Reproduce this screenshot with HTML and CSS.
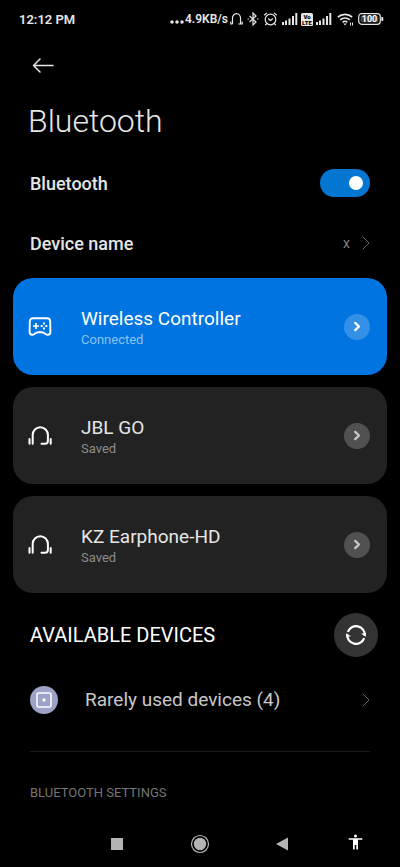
FILE: index.html
```html
<!DOCTYPE html>
<html lang="en">
<head>
<meta charset="utf-8">
<meta name="viewport" content="width=device-width, initial-scale=1">
<title>Bluetooth</title>
<link rel="stylesheet" href="styles.css">
</head>
<body>
<svg class="symbols" aria-hidden="true">
  <symbol id="signal" viewBox="0 0 16 12"><path d="M0 9h2v3H0zM3 7.500h2V12H3zM6.500 5.500h2V12h-2zM10 3h2v9h-2zM13.300 0h2v12h-2z" fill="currentColor"/></symbol>
  <symbol id="chevron" viewBox="0 0 8 14"><path d="M.7.7 7 7 .7 13.300" fill="none" stroke="currentColor"/></symbol>
  <symbol id="arrow" viewBox="0 0 26 26"><path d="m11.200 8.900 3.800 3.600-3.800 3.600" fill="none" stroke="currentColor" stroke-width="2.300" stroke-linecap="round" stroke-linejoin="round"/></symbol>
  <symbol id="headset" viewBox="0 0 24 20"><g fill="none" stroke="currentColor" stroke-width="2" stroke-linecap="round" stroke-linejoin="round"><path d="M4.700 17.700V8.800a7.600 7.600 0 0 1 15.200 0V15q0 2.700-2.700 2.700h-3.700M1.500 13V17.700M22.700 13V17.700"/></g></symbol>
</svg>
<div class="screen">
  <header class="status">
    <span class="clock">12:12 PM</span>
    <span class="speed"><svg width="14" height="4" viewBox="0 0 14 4"><path d="M2 2h0M7 2h0M12 2h0" stroke="currentColor" stroke-width="3.500" stroke-linecap="round"/></svg>4.9KB/s</span>
    <div class="tray">
      <svg width="13" height="13" viewBox="0 0 13 13" fill="none" stroke="currentColor" stroke-width="1.200"><path d="M2.500 11V5.200a4 4.500 0 0 1 8 0V11H8.300M.8 8.500v2.500h1.700M12.200 8.500v2.500h-1.700"/></svg>
      <svg width="14" height="14" viewBox="0 0 14 14" fill="none" stroke="currentColor" stroke-width="1.200"><path d="m3.500 4 6.500 6-3 3V1l3 3-6.500 6"/><path d="M1.500 7H3M11 7h1.500"/></svg>
      <svg width="16" height="14" viewBox="0 0 16 14" fill="none" stroke="currentColor" stroke-width="1.200"><circle cx="7.500" cy="7.500" r="5.300"/><path d="M5.200 6.500 7.500 8.500l2.500-2M1.200 3.300 4 .9M13.800 3.300 11 .9M3.700 11.500l-1.400 1.600M11.300 11.500l1.400 1.600"/></svg>
      <svg width="16" height="12"><use href="#signal"/></svg>
      <svg width="12" height="13" viewBox="0 0 12 13"><rect width="12" height="13" rx="1.500" fill="currentColor"/><text class="volte" x="6" y="6" text-anchor="middle">Vo</text><text class="volte" x="6" y="12" text-anchor="middle">LTE</text></svg>
      <svg width="16" height="12"><use href="#signal"/></svg>
      <svg class="wifi" width="17" height="13" viewBox="0 0 17 13" fill="none" stroke="currentColor" stroke-width="1.600"><path d="M.8 4.200a10.500 10.500 0 0 1 14.400 0M3.200 6.900a7 7 0 0 1 9.600 0M5.600 9.300a3.600 3.600 0 0 1 4.800 0"/><path d="m8 12.500-1.600-1.900h3.200z" fill="currentColor" stroke="none"/><path d="M13.500 9.500v3M15.500 9.500v3" stroke-width="1"/></svg>
      <svg width="26" height="12" viewBox="0 0 26 12"><rect x=".7" y=".7" width="21.600" height="10.600" rx="3" fill="none" stroke="currentColor" stroke-width="1.200"/><rect x="2.500" y="2.500" width="18" height="7" rx="1.500" fill="#444"/><path d="M23.300 4h1q1 0 1 1v2q0 1-1 1h-1z" fill="currentColor"/><text class="charge" x="11.500" y="9" text-anchor="middle">100</text></svg>
    </div>
  </header>

  <main>
    <div class="appbar">
      <button class="back" type="button" aria-label="Back"><svg width="22" height="16" viewBox="0 0 22 16" fill="none" stroke="currentColor" stroke-width="1.500" stroke-linejoin="round" stroke-linecap="round"><path d="M21 8.500H1.500M8 2 1.500 8.500 8 15"/></svg></button>
    </div>
    <h1>Bluetooth</h1>

    <div class="setting">
      <label for="bt">Bluetooth</label>
      <input class="switch" id="bt" type="checkbox" role="switch" checked>
    </div>
    <a class="setting" href="#name">
      <span>Device name</span>
      <span class="value">x <svg class="chev" width="8" height="14"><use href="#chevron"/></svg></span>
    </a>

    <section class="cards">
      <article class="card connected">
        <svg class="kind" width="24" height="20" viewBox="0 0 24 20" fill="none" stroke="currentColor" stroke-width="1.900" stroke-linejoin="round"><path d="M5 1.300h14q3.200 0 3.200 3.200l.2 10.500q0 2.700-2.500 2.700-1.400 0-2.400-.8L16 16q-1-.8-2.200-.8h-3.600q-1.200 0-2.200.8l-1.500.9q-1 .8-2.400.8-2.500 0-2.500-2.700L1.800 4.500Q1.800 1.300 5 1.300z"/><path d="M8 6v6M5 9h6" stroke-width="1.700"/><path d="M16 5.500v2M16 10.500v2M12.700 9h2M17.300 9h2" stroke-width="1.900"/></svg>
        <div class="info"><h2>Wireless Controller</h2><p>Connected</p></div>
        <button class="more" type="button" aria-label="Wireless Controller details"><svg width="26" height="26"><use href="#arrow"/></svg></button>
      </article>
      <article class="card">
        <svg class="kind" width="24" height="20"><use href="#headset"/></svg>
        <div class="info"><h2>JBL GO</h2><p>Saved</p></div>
        <button class="more" type="button" aria-label="JBL GO details"><svg width="26" height="26"><use href="#arrow"/></svg></button>
      </article>
      <article class="card">
        <svg class="kind" width="24" height="20"><use href="#headset"/></svg>
        <div class="info"><h2>KZ Earphone-HD</h2><p>Saved</p></div>
        <button class="more" type="button" aria-label="KZ Earphone-HD details"><svg width="26" height="26"><use href="#arrow"/></svg></button>
      </article>
    </section>

    <div class="available">
      <h2>AVAILABLE DEVICES</h2>
      <button class="refresh" type="button" aria-label="Refresh"><svg width="22" height="22" viewBox="0 0 22 22" fill="none" stroke="currentColor" stroke-width="2.200"><path d="M2.800 7.800A8.800 8.800 0 0 1 19.800 11.500M19.200 14.200A8.800 8.800 0 0 1 2.200 10.500"/><path d="m16 9.700 4.900-.7v3.700zM6 12.300l-4.900.7V9.300z" fill="currentColor" stroke="none"/></svg></button>
    </div>
    <a class="rare" href="#rare">
      <svg width="28" height="28" viewBox="0 0 28 28"><circle cx="14" cy="14" r="14" fill="#9ca3c6"/><rect x="7" y="7" width="14" height="14" rx="1.500" fill="none" stroke="#fff" stroke-width="1.500"/><circle cx="14" cy="14" r="1.700" fill="#fff"/></svg>
      <span>Rarely used devices (4)</span>
      <svg class="chev" width="8" height="14"><use href="#chevron"/></svg>
    </a>
    <h3>BLUETOOTH SETTINGS</h3>
  </main>

  <nav class="nav">
    <div class="keys">
      <button type="button" aria-label="Recent apps"><svg width="20" height="20" viewBox="0 0 20 20"><path d="M4 4h12v12H4z" fill="currentColor"/></svg></button>
      <button type="button" aria-label="Home"><svg width="20" height="20" viewBox="0 0 20 20"><circle cx="10" cy="10" r="8.500" fill="none" stroke="currentColor" stroke-width="1.200"/><circle cx="10" cy="10" r="6.200" fill="currentColor"/></svg></button>
      <button type="button" aria-label="Back"><svg width="20" height="20" viewBox="0 0 20 20"><path d="M3 10 15 3.500v13z" fill="currentColor"/></svg></button>
    </div>
    <button class="access" type="button" aria-label="Accessibility"><svg width="20" height="20" viewBox="0 0 20 20"><circle cx="10.500" cy="2" r="1.500" fill="currentColor"/><path d="M3.700 4.200h13.600v1.600H13V15.500h-1.700v-4.600H9.700v4.600H8V5.800H3.700z" fill="currentColor"/></svg></button>
  </nav>
</div>
</body>
</html>
```
FILE: styles.css
```css
* { box-sizing: border-box; }

body {
  margin: 0;
  background: #000;
  color: #e6e6e6;
  font-family: Roboto, "Liberation Sans", sans-serif;
}

h1, h2, h3, p { margin: 0; font-weight: 400; }
a { color: inherit; text-decoration: none; }
svg { display: block; flex: none; }

button {
  display: grid;
  place-items: center;
  padding: 0;
  border: 0;
  background: none;
  color: inherit;
}

.symbols { position: absolute; width: 0; height: 0; }

.screen {
  display: flex;
  flex-direction: column;
  min-height: 100vh;
}

.status {
  display: flex;
  align-items: center;
  height: 38px;
  padding: 0 16px 0 19px;
  font-weight: 600;
}

.clock { flex: 1; font-size: 13px; }

.speed {
  display: flex;
  align-items: center;
  gap: 1px;
  margin-right: 2px;
  font-size: 12px;
}

.speed svg { margin-top: 6px; }

.tray { display: flex; align-items: center; gap: 3px; }
.wifi { margin: 0 1px 0 2px; }
.volte { font-size: 6px; font-weight: 900; fill: #000; }
.charge { font-size: 9px; font-weight: 700; fill: #fff; }

main { flex: 1; }

.appbar {
  display: flex;
  align-items: center;
  height: 54px;
  padding: 0 32px;
}

h1 {
  padding: 0 28px 3px;
  font-size: 32px;
  font-weight: 300;
  line-height: 58px;
}

.setting {
  display: flex;
  align-items: center;
  justify-content: space-between;
  height: 60px;
  padding: 0 30px;
  font-size: 18px;
  font-weight: 500;
}

.value {
  display: flex;
  align-items: center;
  gap: 12px;
  color: #808080;
  font-size: 14px;
  font-weight: 400;
}

.switch {
  display: flex;
  align-items: center;
  justify-content: flex-end;
  appearance: none;
  width: 50px;
  height: 28px;
  margin: 0;
  padding: 0 7px;
  border-radius: 14px;
  background: #0376d1;
}

.switch::before {
  content: "";
  width: 14px;
  height: 14px;
  border-radius: 50%;
  background: #fff;
}

.switch:not(:checked) { justify-content: flex-start; background: #444; }

.cards {
  display: flex;
  flex-direction: column;
  gap: 12px;
  padding: 5px 13px 0;
}

.card {
  display: flex;
  align-items: center;
  height: 97px;
  padding: 0 17px 0 15px;
  border-radius: 20px;
  background: #222;
}

.card.connected { background: #0074e0; color: #fff; }

.kind { color: #fff; }
.info { flex: 1; padding: 2px 0 0 29px; }
.info h2 { font-size: 19px; line-height: 24px; }
.info p { color: #8c8c8c; font-size: 13px; line-height: 18px; }
.connected .info p { color: #8cc2f3; }

.more {
  width: 26px;
  height: 26px;
  border-radius: 50%;
  background: #515151;
  color: #c8c8c8;
}

.connected .more { background: #3390e6; color: #fff; }

.available {
  display: flex;
  align-items: center;
  justify-content: space-between;
  height: 84px;
  padding: 0 22px 0 30px;
}

.available h2 { color: #fff; font-size: 20px; }

.refresh {
  width: 44px;
  height: 44px;
  border-radius: 50%;
  background: #333;
  color: #fff;
}

.rare {
  display: flex;
  align-items: center;
  height: 75px;
  margin: 0 30px;
  padding-bottom: 29px;
  border-bottom: 1px solid #1a1a1a;
  color: #c8c8c8;
  font-size: 19px;
}

.rare span { flex: 1; padding-left: 27px; }
.chev { color: #666; }

h3 {
  padding: 31px 30px 18px;
  color: #757575;
  font-size: 13px;
  line-height: 20px;
}

.nav {
  display: grid;
  grid-template-columns: 1fr auto 1fr;
  align-items: center;
  height: 46px;
  padding: 0 35px;
  color: #b4b4b4;
}

.keys {
  display: flex;
  grid-column: 2;
  gap: 63px;
}

.access { justify-self: end; color: #fff; }
```
